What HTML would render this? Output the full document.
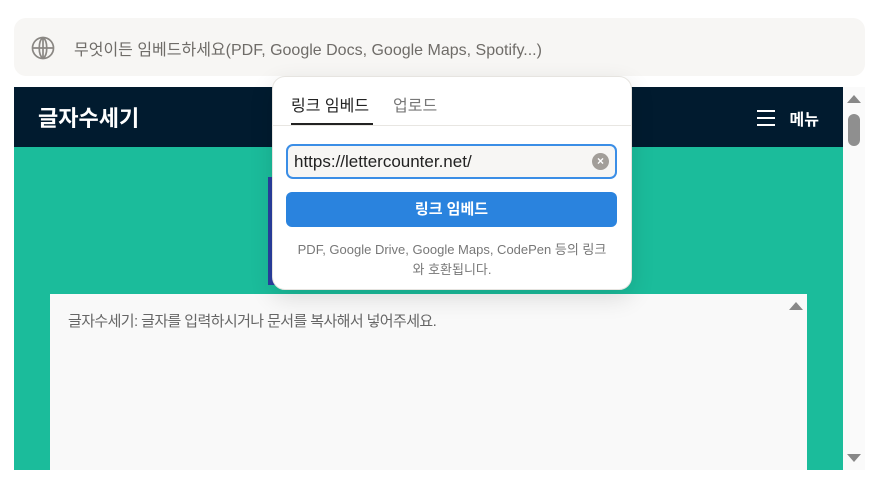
<!DOCTYPE html>
<html><head><meta charset="utf-8"><style>
*{box-sizing:border-box;margin:0;padding:0}
body{width:891px;height:493px;background:#fff;position:relative;overflow:hidden;font-family:"Liberation Sans","Noto Sans CJK KR",sans-serif}
.top{position:absolute;left:14px;top:18px;width:851px;height:58px;background:#f7f6f4;border-radius:12px}
.top svg{position:absolute;left:17px;top:18px}
.top span{position:absolute;left:60px;top:18px;font-size:16px;color:#6f6c68}
.frame{position:absolute;left:14px;top:87px;width:829px;height:383px;background:#1bbc9b;overflow:hidden}
.hdr{position:absolute;left:0;top:0;width:829px;height:60px;background:#011b2f;color:#fff}
.hdr .t{position:absolute;left:24px;top:14px;font-size:22px;font-weight:bold}
.hdr .m{position:absolute;right:24px;top:19px;font-size:16px;font-weight:bold}
.burger{position:absolute;right:68px;top:23px;width:18px}
.burger i{display:block;height:2px;background:#fff;margin-bottom:5px}
.img{position:absolute;left:254px;top:90px;width:30px;height:108px;background:#2a3fa0}
.ta{position:absolute;left:36px;top:207px;width:757px;height:180px;background:#f9f9f9}
.ta span{position:absolute;left:18px;top:16px;font-size:15px;color:#666;letter-spacing:-0.6px}
.tri{position:absolute;width:0;height:0;border-left:7px solid transparent;border-right:7px solid transparent}
.sb{position:absolute;left:843px;top:87px;width:22px;height:383px;background:#fafafa}
.pop{position:absolute;left:272px;top:76px;width:360px;height:214px;background:#fff;border-radius:13px;border:1px solid #e6e4e0;box-shadow:0 8px 24px rgba(0,0,0,.12)}
.tab{position:absolute;top:15px;font-size:16px}
.ul{position:absolute;left:18px;top:46px;width:82px;height:2px;background:#222}
.dv{position:absolute;left:0;top:48px;width:358px;height:1px;background:#e8e6e2}
.in{position:absolute;left:13px;top:67px;width:331px;height:35px;border:2px solid #3b8ee6;border-radius:7px;background:#f7f6f4}
.in span{position:absolute;left:6px;top:6px;font-size:17px;color:#222}
.clr{position:absolute;right:6px;top:7px;width:17px;height:17px;border-radius:50%;background:#a29e99;color:#fff;font-size:12px;text-align:center;line-height:17px;font-weight:bold}
.btn{position:absolute;left:13px;top:115px;width:331px;height:35px;background:#2a83de;border-radius:6px;color:#fff;font-weight:bold;font-size:15px;text-align:center;line-height:35px}
.help{position:absolute;left:4px;top:163px;width:350px;text-align:center;font-size:13px;color:#777;line-height:20px}
</style></head><body>
<div class="top"><svg width="24" height="24" viewBox="0 0 24 24" fill="none" stroke="#8a8783" stroke-width="1.7"><circle cx="12" cy="12" r="10.5"/><path d="M1.5 12h21M12 1.5v21M12 1.5c-5 3.5-5 17.5 0 21M12 1.5c5 3.5 5 17.5 0 21"/></svg><span>무엇이든 임베드하세요(PDF, Google Docs, Google Maps, Spotify...)</span></div>
<div class="frame">
<div class="hdr"><div class="t">글자수세기</div><div class="burger"><i></i><i></i><i></i></div><div class="m">메뉴</div></div>
<div class="img"></div>
<div class="ta"><span>글자수세기: 글자를 입력하시거나 문서를 복사해서 넣어주세요.</span><div class="tri" style="left:739px;top:8px;border-bottom:8px solid #888"></div></div>
</div>
<div class="sb"><div class="tri" style="left:4px;top:8px;border-bottom:8px solid #888"></div><div style="position:absolute;left:5px;top:27px;width:12px;height:32px;border-radius:6px;background:#8f8f8f"></div><div class="tri" style="left:4px;top:367px;border-top:8px solid #888"></div></div>
<div class="pop">
<div class="tab" style="left:18px;color:#222">링크 임베드</div><div class="tab" style="left:120px;color:#777">업로드</div>
<div class="ul"></div><div class="dv"></div>
<div class="in"><span>https://lettercounter.net/</span><div class="clr">×</div></div>
<div class="btn">링크 임베드</div>
<div class="help">PDF, Google Drive, Google Maps, CodePen 등의 링크<br>와 호환됩니다.</div>
</div>
</body></html>
